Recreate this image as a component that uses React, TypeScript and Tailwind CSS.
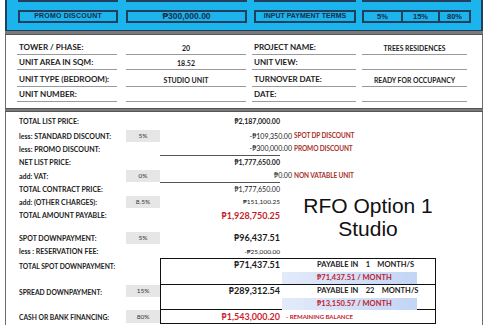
const hdrBox = "h-[13px] border-2 border-[#22405e] flex items-center justify-center";

function HeaderRow({ filled }: { filled: boolean }) {
  return (
    <div className="flex">
      <div className={`${hdrBox} w-[100px]`}>{filled && <span className="text-[7px] tracking-[0.2px]">PROMO DISCOUNT</span>}</div>
      <div className={`${hdrBox} w-[121px] ml-[8px]`}>{filled && <span className="text-[8.5px]">₱300,000.00</span>}</div>
      <div className={`${hdrBox} w-[102px] ml-[7px]`}>{filled && <span className="text-[7px]">INPUT PAYMENT TERMS</span>}</div>
      <div className="ml-[6px] flex">
        <div className={`${hdrBox} w-[39px] border-r-0`}>{filled && <span className="text-[7.5px]">5%</span>}</div>
        <div className={`${hdrBox} w-[37px] border-r-0`}>{filled && <span className="text-[7.5px]">15%</span>}</div>
        <div className={`${hdrBox} w-[33px]`}>{filled && <span className="text-[7.5px]">80%</span>}</div>
      </div>
    </div>
  );
}

function InfoRow({ a, b, c, d, h }: { a: string; b: string; c: string; d: string; h: string }) {
  const cell = `${h} border-b border-[#9a9a9a] flex items-end pb-[1px] font-bold`;
  return (
    <div className="flex">
      <div className={`${cell} w-[100px] pl-[2px] text-[8px]`}>{a}</div>
      <div className={`${cell} w-[120px] ml-[9px] justify-center text-[7px]`}>{b}</div>
      <div className={`${cell} w-[104px] ml-[6px] pl-[2px] text-[8px]`}>{c}</div>
      <div className={`${cell} w-[105px] ml-[6px] justify-center text-[6.8px]`}>{d}</div>
    </div>
  );
}

function Pct({ v }: { v?: string }) {
  return (
    <div className="flex items-center">
      {v && <div className="w-[34px] h-[12px] bg-[#e6e6e6] flex items-center justify-center text-[6.5px] text-[#333]">{v}</div>}
    </div>
  );
}

function Label({ t }: { t: string }) {
  return <div className="flex items-center text-[7px] font-bold whitespace-nowrap">{t}</div>;
}

function Val({ t, cls, line, wide }: { t: string; cls: string; line?: boolean; wide?: boolean }) {
  return (
    <div className="flex flex-col">
      <div className={`flex-1 flex items-center justify-end whitespace-nowrap ${wide ? "pr-0" : "pr-[12px]"} ${cls}`}>{t}</div>
      {line && <div className="h-px w-[120px] bg-[#555]" />}
    </div>
  );
}

function Note({ t }: { t?: string }) {
  return <div className="flex items-center pl-[2px] text-[6.5px] tracking-[-0.1px] font-bold text-[#a8302c] whitespace-nowrap">{t}</div>;
}

function BoxRight({ months, monthly }: { months: string; monthly: string }) {
  return (
    <div className="flex flex-col pl-[2px] pt-[1px]">
      <div className="pl-[35px] text-[7.5px] font-bold whitespace-pre leading-[10px]">{`PAYABLE IN    ${months}    MONTH/S`}</div>
      <div className="mt-[2px] w-[135px] h-[12px] bg-gradient-to-r from-[#e3ebfa] to-[#c3d5f5] flex items-center pl-[35px] text-[7.5px] font-bold text-[#c0202c]">
        {monthly}
      </div>
    </div>
  );
}

export default function App() {
  return (
    <div className="w-[490px] h-[325px] overflow-hidden bg-white font-['Lato',sans-serif] text-[#1c1c1c]">
      <div className="ml-[5px] w-[478px]">
        <div className="h-[31px] bg-[#1cb4ec] border-x-2 border-b border-[#22405e] overflow-hidden font-['Liberation_Sans',sans-serif] font-bold text-[#1b2b44]">
          <div className="-mt-[11px] flex flex-col gap-[8px] pl-[11px]">
            <HeaderRow filled={false} />
            <HeaderRow filled />
          </div>
        </div>
        <div className="h-[4px] bg-[#7a7a7a] border-b border-[#555]" />

        <div className="h-[73px] border-x-[1.5px] border-[#6e6e6e] pl-[11px] pt-[5px]">
          <InfoRow h="h-[15px]" a="TOWER / PHASE:" b="20" c="PROJECT NAME:" d="TREES RESIDENCES" />
          <InfoRow h="h-[15px]" a="UNIT AREA IN SQM:" b="18.52" c="UNIT VIEW:" d="" />
          <InfoRow h="h-[17px]" a="UNIT TYPE (BEDROOM):" b="STUDIO UNIT" c="TURNOVER DATE:" d="READY FOR OCCUPANCY" />
          <InfoRow h="h-[15px]" a="UNIT NUMBER:" b="" c="DATE:" d="" />
        </div>
        <div className="h-[4px] bg-[#7a7a7a] border-y border-[#555]" />

        <div className="h-[213px] border-x-[1.5px] border-[#6e6e6e] pl-[13px]">
          <div className="grid grid-cols-[107px_34px_132px_1fr] grid-rows-[18px_12px_14px_13px_14px_12px_14px_13px_9px_14px_13px]">
            <div className="col-start-4 row-start-6 row-span-6 w-[152px] pt-[11px] text-center font-['Liberation_Sans',sans-serif] text-[21px] leading-[23px] text-[#111]">
              RFO Option 1<br />Studio
            </div>

            <Label t="TOTAL LIST PRICE:" /><Pct /><Val t="₱2,187,000.00" cls="text-[7px] font-bold" /><Note />
            <Label t="less: STANDARD DISCOUNT:" /><Pct v="5%" /><Val wide t="-₱109,350.00" cls="text-[7px]" /><Note t="SPOT DP DISCOUNT" />
            <Label t="less: PROMO DISCOUNT:" /><Pct /><Val wide line t="-₱300,000.00" cls="text-[7px]" /><Note t="PROMO DISCOUNT" />
            <Label t="NET LIST PRICE:" /><Pct /><Val t="₱1,777,650.00" cls="text-[7px] font-bold" /><Note />
            <Label t="add: VAT:" /><Pct v="0%" /><Val wide line t="₱0.00" cls="text-[7px]" /><Note t="NON VATABLE UNIT" />
            <Label t="TOTAL CONTRACT PRICE:" /><Pct /><Val t="₱1,777,650.00" cls="text-[7px]" />
            <Label t="add: (OTHER CHARGES):" /><Pct v="8.5%" /><Val t="₱151,100.25" cls="text-[6.5px]" />
            <Label t="TOTAL AMOUNT PAYABLE:" /><Pct /><Val t="₱1,928,750.25" cls="text-[9px] font-bold text-[#c41e2a]" />
            <div /><div /><div />
            <Label t="SPOT DOWNPAYMENT:" /><Pct v="5%" /><Val t="₱96,437.51" cls="text-[9px] font-bold" />
            <Label t="less : RESERVATION FEE:" /><Pct /><Val t="-₱25,000.00" cls="text-[6.5px]" />
          </div>

          <div className="flex">
            <div className="w-[141px] flex flex-col text-[6.7px] font-bold">
              <div className="h-[27px] flex items-start pt-[3px]">TOTAL SPOT DOWNPAYMENT:</div>
              <div className="h-[25px] flex items-start">
                <div className="w-[107px] pt-[2px]">SPREAD DOWNPAYMENT:</div>
                <div className="w-[34px] h-[12px] bg-[#e6e6e6] flex items-center justify-center text-[6.5px] font-normal text-[#333]">15%</div>
              </div>
              <div className="h-[14px] flex items-start">
                <div className="w-[107px] pt-[2px]">CASH OR BANK FINANCING:</div>
                <div className="w-[34px] h-[13px] bg-[#e6e6e6] flex items-center justify-center text-[6.5px] font-normal text-[#333]">80%</div>
              </div>
            </div>

            <div className="w-[276px] border border-[#111]">
              <div className="h-[26px] border-b border-[#111] grid grid-cols-[119px_1fr]">
                <div className="text-right text-[9px] font-bold leading-[12px]">₱71,437.51</div>
                <BoxRight months="1" monthly="₱71,437.51 / MONTH" />
              </div>
              <div className="h-[25px] border-b border-[#111] grid grid-cols-[119px_1fr]">
                <div className="text-right text-[9px] font-bold leading-[12px]">₱289,312.54</div>
                <BoxRight months="22" monthly="₱13,150.57 / MONTH" />
              </div>
              <div className="h-[13px] grid grid-cols-[119px_1fr] items-center">
                <div className="text-right text-[9px] font-bold leading-[12px] text-[#cc1f30]">₱1,543,000.20</div>
                <div className="pl-[6px] text-[6px] font-bold text-[#c0202c]">- REMAINING BALANCE</div>
              </div>
            </div>
          </div>
        </div>
      </div>
    </div>
  );
}
